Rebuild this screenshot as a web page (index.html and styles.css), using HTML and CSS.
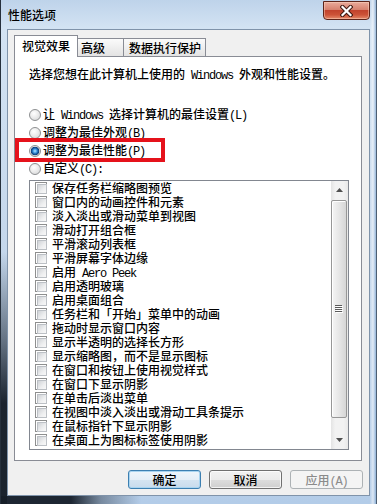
FILE: index.html
```html
<!DOCTYPE html>
<html lang="zh-CN">
<head>
<meta charset="utf-8">
<title>性能选项</title>
<link rel="stylesheet" href="styles.css">
</head>
<body>
<div class="window">
  <div class="titlebar">
    <span class="title">性能选项</span>
    <span class="close" aria-label="关闭">
      <svg width="13" height="12" viewBox="0 0 13 12"><path d="M2.5 2 L10.5 10 M10.5 2 L2.5 10" stroke="#3d1810" stroke-width="4.2" stroke-linecap="square"/><path d="M2.5 2 L10.5 10 M10.5 2 L2.5 10" stroke="#fff" stroke-width="2.2" stroke-linecap="square"/></svg>
    </span>
  </div>
  <div class="client">
    <div class="tabs">
      <div class="tab active">视觉效果</div>
      <div class="tab t2">高级</div>
      <div class="tab t3">数据执行保护</div>
    </div>
    <div class="panel">
      <p class="desc">选择您想在此计算机上使用的<span class="m"> Windows </span>外观和性能设置。</p>
      <div class="options">
        <div class="opt"><span class="radio"></span><span>让<span class="m"> Windows </span>选择计算机的最佳设置<span class="m">(L)</span></span></div>
        <div class="opt"><span class="radio"></span><span>调整为最佳外观<span class="m">(B)</span></span></div>
        <div class="opt"><span class="radio on"></span><span>调整为最佳性能<span class="m">(P)</span></span><span class="mark"></span></div>
        <div class="opt"><span class="radio"></span><span>自定义<span class="m">(C):</span></span></div>
      </div>
      <div class="listbox">
        <ul class="items">
          <li><span class="cb"></span><span>保存任务栏缩略图预览</span></li>
          <li><span class="cb"></span><span>窗口内的动画控件和元素</span></li>
          <li><span class="cb"></span><span>淡入淡出或滑动菜单到视图</span></li>
          <li><span class="cb"></span><span>滑动打开组合框</span></li>
          <li><span class="cb"></span><span>平滑滚动列表框</span></li>
          <li><span class="cb"></span><span>平滑屏幕字体边缘</span></li>
          <li><span class="cb"></span><span>启用<span class="m"> Aero Peek</span></span></li>
          <li><span class="cb"></span><span>启用透明玻璃</span></li>
          <li><span class="cb"></span><span>启用桌面组合</span></li>
          <li><span class="cb"></span><span>任务栏和「开始」菜单中的动画</span></li>
          <li><span class="cb"></span><span>拖动时显示窗口内容</span></li>
          <li><span class="cb"></span><span>显示半透明的选择长方形</span></li>
          <li><span class="cb"></span><span>显示缩略图，而不是显示图标</span></li>
          <li><span class="cb"></span><span>在窗口和按钮上使用视觉样式</span></li>
          <li><span class="cb"></span><span>在窗口下显示阴影</span></li>
          <li><span class="cb"></span><span>在单击后淡出菜单</span></li>
          <li><span class="cb"></span><span>在视图中淡入淡出或滑动工具条提示</span></li>
          <li><span class="cb"></span><span>在鼠标指针下显示阴影</span></li>
          <li><span class="cb"></span><span>在桌面上为图标标签使用阴影</span></li>
        </ul>
        <div class="scrollbar">
          <div class="sb-btn"><svg width="7" height="4" viewBox="0 0 7 4"><polygon points="0,4 3.5,0 7,4" fill="#4f4f4f"/></svg></div>
          <div class="thumb"><svg width="8" height="8" viewBox="0 0 8 8"><path d="M0 0.5h7M0 2.5h7M0 4.5h7M0 6.5h7" stroke="#5a5a5a"/><path d="M1 1.5h7M1 3.5h7M1 5.5h7M1 7.5h7" stroke="#fff"/></svg></div>
          <div class="sb-btn down"><svg width="7" height="4" viewBox="0 0 7 4"><polygon points="0,0 7,0 3.5,4" fill="#4f4f4f"/></svg></div>
        </div>
      </div>
    </div>
    <div class="buttons">
      <button class="btn default">确定</button>
      <button class="btn">取消</button>
      <button class="btn disabled">应用<span class="m">(A)</span></button>
    </div>
  </div>
</div>
</body>
</html>
```

FILE: styles.css
```css
* { box-sizing: border-box; }
html, body { margin: 0; padding: 0; }
body {
  width: 377px;
  height: 504px;
  overflow: hidden;
  font-family: "Noto Sans CJK SC", "Noto Sans", sans-serif;
  font-size: 12px;
  font-weight: 500;
  line-height: 14px;
  color: #000;
}
.m {
  font-family: "Liberation Mono", "Noto Sans CJK SC", monospace;
  font-weight: 400;
  letter-spacing: -1.2px;
}

.window {
  width: 377px;
  height: 504px;
  border-left: 1px solid #26303c;
  border-right: 1px solid #4c5e72;
  padding: 0 6px 8px;
  display: flex;
  flex-direction: column;
  background:
    linear-gradient(to bottom, rgba(22,30,40,0) 50%, rgba(22,30,40,.55) 68%, rgba(22,30,40,.97) 80%) left top / 6px 100% no-repeat,
    linear-gradient(to right, #1d2632 0, #1d2632 70px, rgba(29,38,50,.4) 100px, rgba(29,38,50,0) 140px) left bottom / 100% 8px no-repeat,
    linear-gradient(to right, rgba(255,255,255,0) 0, rgba(255,255,255,.55) 50%, rgba(120,160,205,.6) 100%) right top / 6px 100% no-repeat,
    linear-gradient(to bottom, #bed3ea 0, #d3e3f3 28px, #c6d8ec 45%, #b3cce8 100%);
}

.titlebar {
  height: 29px;
  display: flex;
  align-items: flex-start;
  padding-left: 1px;
}
.title { margin-top: 8px; }
.close {
  margin-left: auto;
  margin-top: 1px;
  width: 47px;
  height: 19px;
  border: 1px solid #5c241a;
  border-radius: 0 0 4px 4px;
  background: linear-gradient(#e9ab9b 0, #d7826f 45%, #c2432d 50%, #cc5237 75%, #e58a6b 100%);
  box-shadow: inset 0 0 0 1px rgba(255,220,200,.45);
  display: flex;
  align-items: center;
  justify-content: center;
}

.client {
  height: 467px;
  border: 1px solid #7f93aa;
  background: #f0f0f0;
  padding: 5px 7px 0 6px;
}

.tabs {
  height: 21px;
  display: flex;
  align-items: flex-end;
}
.tab {
  height: 18px;
  border: 1px solid #898c95;
  border-bottom: none;
  background: linear-gradient(#fbfbfb, #efefef 50%, #e3e3e3);
  line-height: 14px;
  white-space: nowrap;
}
.tab.active {
  width: 64px;
  height: 22px;
  margin-bottom: -1px;
  position: relative;
  z-index: 1;
  background: #fff;
  padding: 3px 0 0 7px;
}
.t2 { width: 46px; border-left: none; padding: 2px 0 0 3px; }
.t3 { width: 82px; border-left: none; padding: 2px 0 0 5px; }

.panel {
  height: 405px;
  border: 1px solid #898c95;
  background: #fff;
  padding: 10px 0 0 14px;
}
.desc { margin: 0; white-space: nowrap; }

.options { margin-top: 23px; }
.opt {
  position: relative;
  height: 18px;
  line-height: 18px;
  display: flex;
  align-items: center;
  gap: 2px;
  white-space: nowrap;
}
.radio {
  width: 12px;
  height: 12px;
  flex: none;
  border-radius: 50%;
  border: 1px solid #8d8f91;
  background: radial-gradient(circle at 40% 35%, #ffffff 0, #ececec 45%, #cfd1d3 100%);
}
.radio.on {
  background:
    radial-gradient(circle at 50% 50%, #bfe6ff 0, #55aef0 1.5px, #1a5fa6 3px, #0e3f78 4px, rgba(14,63,120,0) 4.6px),
    radial-gradient(circle at 40% 35%, #ffffff 0, #ececec 45%, #cfd1d3 100%);
}
.mark {
  position: absolute;
  left: -14px;
  top: -4px;
  width: 150px;
  height: 24px;
  border: 4px solid #e5121b;
}

.listbox {
  margin-top: 2px;
  width: 320px;
  height: 270px;
  border: 1px solid #828790;
  display: flex;
}
.items {
  list-style: none;
  margin: 0;
  padding: 0;
  flex: 1;
}
.items li {
  height: 14px;
  line-height: 14px;
  display: flex;
  align-items: flex-start;
  padding-left: 5px;
  white-space: nowrap;
}
.cb {
  width: 12px;
  height: 12px;
  flex: none;
  margin: 1px 5px 0 0;
  border: 1px solid #8e8f8f;
  background: #fff;
  padding: 1px;
}
.cb::after {
  content: "";
  display: block;
  width: 100%;
  height: 100%;
  border: 1px solid #bcc0c5;
  background: linear-gradient(135deg, #cfd2d6, #eeeff0 60%, #f8f8f8);
}

.scrollbar {
  width: 17px;
  flex: none;
  display: flex;
  flex-direction: column;
  background: linear-gradient(to right, #e4e4e4, #f2f2f2 25%, #f2f2f2 75%, #e8e8e8);
}
.sb-btn {
  height: 18px;
  display: flex;
  align-items: center;
  justify-content: center;
}
.sb-btn.down { margin-top: auto; }
.thumb {
  margin: 1px 1px 0 0;
  height: 218px;
  border: 1px solid #979797;
  border-radius: 2px;
  background: linear-gradient(to right, #f5f5f5, #e8e8e8 45%, #d6d6d6);
  box-shadow: inset 1px 1px 0 #fff;
  display: flex;
  align-items: center;
  justify-content: center;
}

.buttons {
  display: flex;
  justify-content: flex-end;
  gap: 8px;
  margin: 9px -1px 0 0;
}
.btn {
  width: 73px;
  height: 19px;
  padding: 0;
  border: 1px solid #707070;
  border-radius: 3px;
  font: inherit;
  font-size: 12px;
  line-height: 17px;
  color: #000;
  background: linear-gradient(#f2f2f2 0, #ebebeb 50%, #dddddd 51%, #cfcfcf 100%);
  box-shadow: inset 0 0 0 1px rgba(255,255,255,.75);
}
.btn.default {
  border-color: #3c7fb1;
  background: linear-gradient(#eef5fb 0, #e4eef7 50%, #d5e4f1 51%, #c8dbec 100%);
  box-shadow: inset 0 0 0 1px #a9d4f0;
}
.btn.disabled {
  color: #8b8b8b;
  border-color: #adb2b5;
  background: #f4f4f4;
  box-shadow: none;
}
```
